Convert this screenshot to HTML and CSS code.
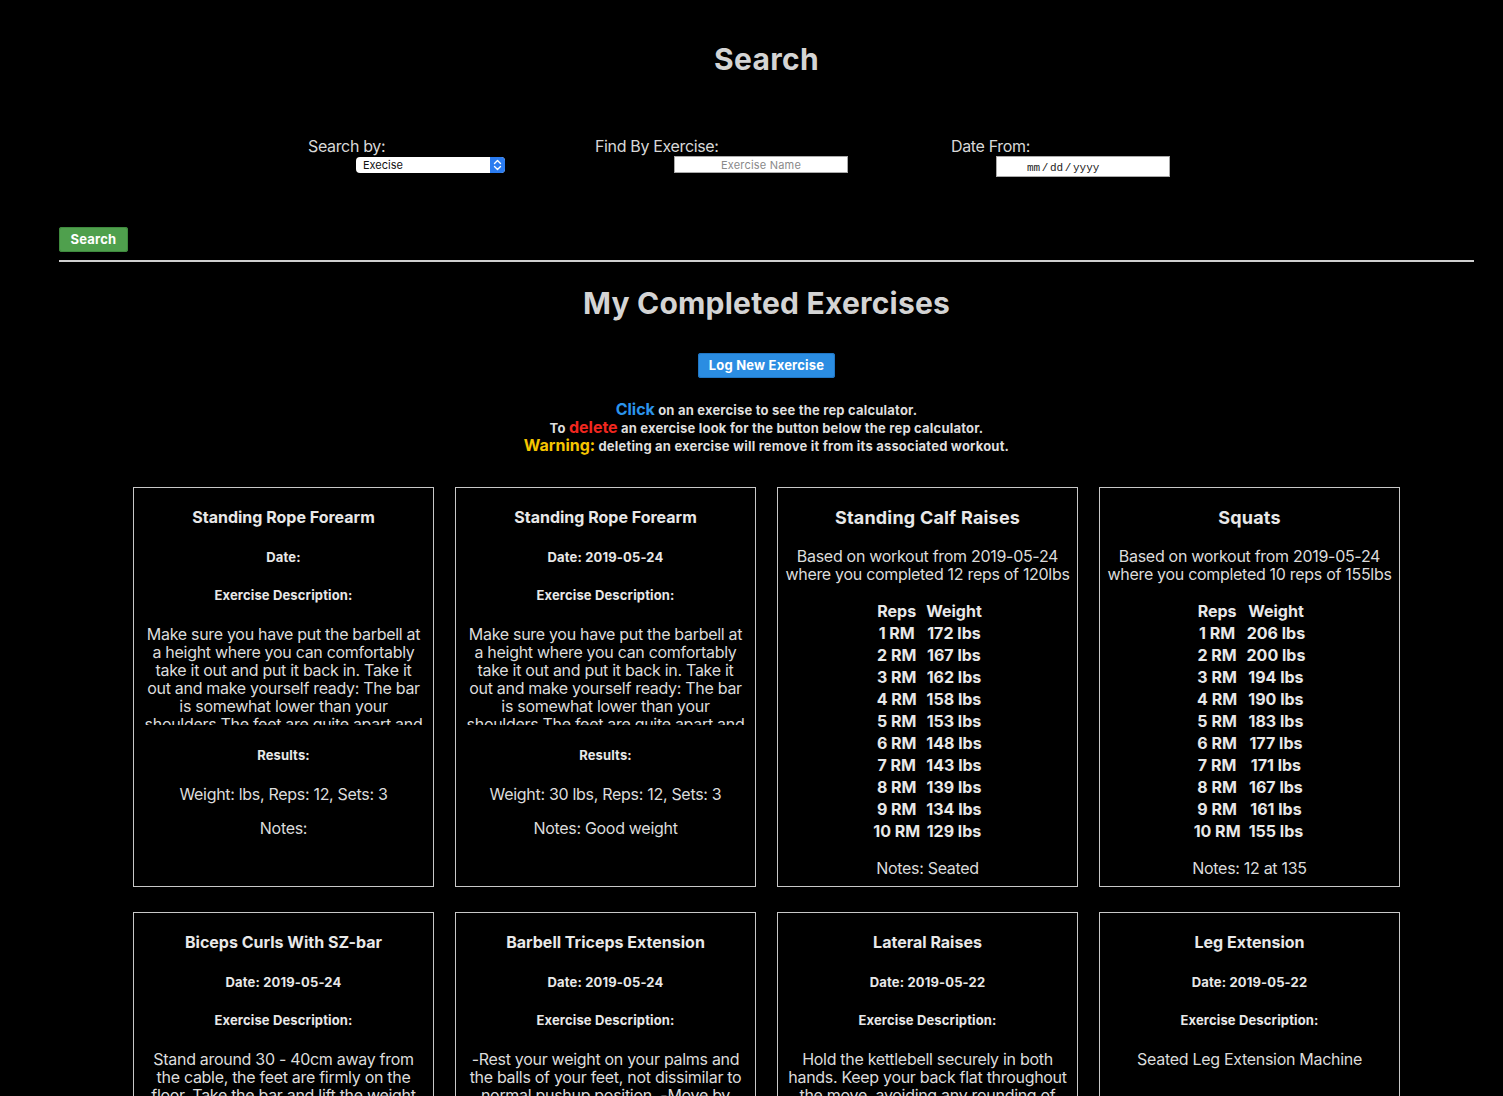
FILE: index.html
```html
<!DOCTYPE html>
<html lang="en">
<head>
<meta charset="utf-8">
<title>Search</title>
<link rel="stylesheet" href="styles.css">
</head>
<body>
<div class="page">
  <h1 class="page-title">Search</h1>
  <form class="search-form">
    <div class="search-row">
      <div class="field field-by">
        <label class="field-label">Search by:</label>
        <span class="select-wrap">
          <select class="select-input"><option>Execise</option></select>
          <span class="select-arrows"><svg width="15" height="16" viewBox="0 0 15 16"><path d="M4.5 6.5 7.5 3.5 10.5 6.5M4.5 9.5 7.5 12.5 10.5 9.5" fill="none" stroke="#fff" stroke-width="1.4" stroke-linecap="round" stroke-linejoin="round"/></svg></span>
        </span>
      </div>
      <div class="field field-name">
        <label class="field-label">Find By Exercise:</label>
        <input class="text-input" type="text" placeholder="Exercise Name">
      </div>
      <div class="field field-date">
        <label class="field-label">Date From:</label>
        <input class="date-input" type="text" spellcheck="false" placeholder="mm / dd / yyyy">
      </div>
    </div>
    <button class="btn btn-green" type="button">Search</button>
  </form>
  <hr class="divider">
  <h1 class="section-title">My Completed Exercises</h1>
  <div class="center"><button class="btn btn-blue" type="button">Log New Exercise</button></div>
  <div class="info">
    <p><span class="hl hl-blue">Click</span> on an exercise to see the rep calculator.</p>
    <p>To <span class="hl hl-red">delete</span> an exercise look for the button below the rep calculator.</p>
    <p><span class="hl hl-yellow">Warning:</span> deleting an exercise will remove it from its associated workout.</p>
  </div>

  <div class="cards">
    <div class="card">
      <h4 class="card-title">Standing Rope Forearm</h4>
      <h5 class="card-sub">Date:</h5>
      <h5 class="card-sub">Exercise Description:</h5>
      <p class="card-desc">Make sure you have put the barbell at a height where you can comfortably take it out and put it back in. Take it out and make yourself ready: The bar is somewhat lower than your shoulders The feet are quite apart and point a bit outwards. Go down slowly.</p>
      <h5 class="card-sub">Results:</h5>
      <p class="card-result">Weight: lbs, Reps: 12, Sets: 3</p>
      <p class="card-notes">Notes:</p>
    </div>
    <div class="card">
      <h4 class="card-title">Standing Rope Forearm</h4>
      <h5 class="card-sub">Date: 2019-05-24</h5>
      <h5 class="card-sub">Exercise Description:</h5>
      <p class="card-desc">Make sure you have put the barbell at a height where you can comfortably take it out and put it back in. Take it out and make yourself ready: The bar is somewhat lower than your shoulders The feet are quite apart and point a bit outwards. Go down slowly.</p>
      <h5 class="card-sub">Results:</h5>
      <p class="card-result">Weight: 30 lbs, Reps: 12, Sets: 3</p>
      <p class="card-notes">Notes: Good weight</p>
    </div>
    <div class="card card-calc">
      <h3 class="calc-title">Standing Calf Raises</h3>
      <p class="calc-based">Based on workout from 2019-05-24 where you completed 12 reps of 120lbs</p>
      <table class="rm-table">
        <tr><th>Reps</th><th>Weight</th></tr>
        <tr><td>1 RM</td><td>172 lbs</td></tr>
        <tr><td>2 RM</td><td>167 lbs</td></tr>
        <tr><td>3 RM</td><td>162 lbs</td></tr>
        <tr><td>4 RM</td><td>158 lbs</td></tr>
        <tr><td>5 RM</td><td>153 lbs</td></tr>
        <tr><td>6 RM</td><td>148 lbs</td></tr>
        <tr><td>7 RM</td><td>143 lbs</td></tr>
        <tr><td>8 RM</td><td>139 lbs</td></tr>
        <tr><td>9 RM</td><td>134 lbs</td></tr>
        <tr><td>10 RM</td><td>129 lbs</td></tr>
      </table>
      <p class="calc-notes">Notes: Seated</p>
    </div>
    <div class="card card-calc">
      <h3 class="calc-title">Squats</h3>
      <p class="calc-based">Based on workout from 2019-05-24 where you completed 10 reps of 155lbs</p>
      <table class="rm-table">
        <tr><th>Reps</th><th>Weight</th></tr>
        <tr><td>1 RM</td><td>206 lbs</td></tr>
        <tr><td>2 RM</td><td>200 lbs</td></tr>
        <tr><td>3 RM</td><td>194 lbs</td></tr>
        <tr><td>4 RM</td><td>190 lbs</td></tr>
        <tr><td>5 RM</td><td>183 lbs</td></tr>
        <tr><td>6 RM</td><td>177 lbs</td></tr>
        <tr><td>7 RM</td><td>171 lbs</td></tr>
        <tr><td>8 RM</td><td>167 lbs</td></tr>
        <tr><td>9 RM</td><td>161 lbs</td></tr>
        <tr><td>10 RM</td><td>155 lbs</td></tr>
      </table>
      <p class="calc-notes">Notes: 12 at 135</p>
    </div>

    <div class="card">
      <h4 class="card-title">Biceps Curls With SZ-bar</h4>
      <h5 class="card-sub">Date: 2019-05-24</h5>
      <h5 class="card-sub">Exercise Description:</h5>
      <p class="card-desc">Stand around 30 - 40cm away from the cable, the feet are firmly on the floor. Take the bar and lift the weight with a fast movements. Lower the weight as with the usual curls.</p>
      <h5 class="card-sub">Results:</h5>
      <p class="card-result">Weight: 25 lbs, Reps: 12, Sets: 3</p>
      <p class="card-notes">Notes:</p>
    </div>
    <div class="card">
      <h4 class="card-title">Barbell Triceps Extension</h4>
      <h5 class="card-sub">Date: 2019-05-24</h5>
      <h5 class="card-sub">Exercise Description:</h5>
      <p class="card-desc">-Rest your weight on your palms and the balls of your feet, not dissimilar to normal pushup position. -Move by stepping your hands forward and back.</p>
      <h5 class="card-sub">Results:</h5>
      <p class="card-result">Weight: 40 lbs, Reps: 10, Sets: 3</p>
      <p class="card-notes">Notes:</p>
    </div>
    <div class="card">
      <h4 class="card-title">Lateral Raises</h4>
      <h5 class="card-sub">Date: 2019-05-22</h5>
      <h5 class="card-sub">Exercise Description:</h5>
      <p class="card-desc">Hold the kettlebell securely in both hands. Keep your back flat throughout the move, avoiding any rounding of the spine.</p>
      <h5 class="card-sub">Results:</h5>
      <p class="card-result">Weight: 15 lbs, Reps: 12, Sets: 3</p>
      <p class="card-notes">Notes:</p>
    </div>
    <div class="card">
      <h4 class="card-title">Leg Extension</h4>
      <h5 class="card-sub">Date: 2019-05-22</h5>
      <h5 class="card-sub">Exercise Description:</h5>
      <p class="card-desc">Seated Leg Extension Machine</p>
      <h5 class="card-sub">Results:</h5>
      <p class="card-result">Weight: 90 lbs, Reps: 12, Sets: 3</p>
      <p class="card-notes">Notes:</p>
    </div>
  </div>
</div>
</body>
</html>
```

FILE: styles.css
```css
* { box-sizing: border-box; }
html, body { background: #000; }
body {
  margin: 0;
  font-family: Inter, "Liberation Sans", sans-serif;
  color: #e2e2e2;
}
.page {
  padding: 0 29px 40px 59px;
}
.page-title {
  margin: 41px 0 0;
  font-size: 30px;
  line-height: 36px;
  font-weight: 700;
  letter-spacing: 0.3px;
  text-align: center;
  color: #d4d4d4;
}
.search-form { margin: 0; }
.search-row {
  display: flex;
  margin-top: 60px;
  padding-left: 249px;
}
.field { display: flex; flex-direction: column; align-items: flex-start; }
.field-by { width: 287px; }
.field-name { width: 356px; }
.field-label {
  font-size: 16px;
  line-height: 19px;
  letter-spacing: -0.35px;
  color: #d8d8d8;
  font-weight: 400;
}
.select-wrap {
  position: relative;
  display: block;
  margin: 1px 0 0 48px;
  width: 149px;
  height: 16px;
}
.select-input {
  -webkit-appearance: none;
  appearance: none;
  display: block;
  width: 149px;
  height: 16px;
  border: 0;
  border-radius: 4px;
  background: #fff;
  color: #111;
  font-family: Inter, "Liberation Sans", sans-serif;
  font-size: 11px;
  line-height: 16px;
  padding: 0 0 0 7px;
  margin: 0;
}
.select-arrows {
  position: absolute;
  right: 0;
  top: 0;
  width: 15px;
  height: 16px;
  background: #2b7cf0;
  border-radius: 0 4px 4px 0;
  display: flex;
}
.text-input {
  margin: 0 0 0 79px;
  width: 174px;
  height: 17px;
  border: 1px solid #aaa;
  background: #fff;
  padding: 0;
  font-family: Inter, "Liberation Sans", sans-serif;
  font-size: 11px;
  text-align: center;
  color: #333;
}
.text-input::placeholder { color: #8a8a8a; letter-spacing: 0.2px; }
.date-input {
  margin: 0 0 0 45px;
  width: 174px;
  height: 21px;
  border: 1px solid #aaa;
  background: #fff;
  padding: 2px 0 0 30px;
  font-family: "Liberation Mono", monospace;
  font-size: 11px;
  color: #222;
}
.date-input::placeholder { color: #222; word-spacing: -5px; }
.btn {
  display: inline-block;
  border: 0;
  border-radius: 3px;
  color: #fff;
  font-family: Inter, "Liberation Sans", sans-serif;
  font-size: 13px;
  font-weight: 700;
  letter-spacing: 0.2px;
  height: 25px;
  line-height: 25px;
  padding: 0 13px;
  cursor: pointer;
}
.btn-green {
  display: block;
  margin-top: 50px;
  width: 69px;
  padding: 0;
  background: #4fa04d;
  box-shadow: inset 0 0 0 1px #3f8a3e;
}
.btn-blue {
  background: #2b8de2;
  width: 137px;
  padding: 0;
  box-shadow: inset 0 0 0 1px #2076c4;
}
.divider {
  margin: 8px 0 0;
  border: 0;
  height: 2px;
  background: #cfcfcf;
}
.section-title {
  margin: 23px 0 0;
  font-size: 30px;
  line-height: 36px;
  font-weight: 700;
  letter-spacing: 0.2px;
  text-align: center;
  color: #d4d4d4;
}
.center { text-align: center; margin-top: 32px; font-size: 0; }
.info {
  margin-top: 23px;
  text-align: center;
  font-size: 13px;
  font-weight: 700;
  letter-spacing: 0.2px;
  color: #dedede;
}
.info p { margin: 0; height: 18px; line-height: 18px; }
.hl { font-size: 16px; line-height: 16px; letter-spacing: 0; }
.hl-blue { color: #2b94ec; }
.hl-red { color: #f1271f; }
.hl-yellow { color: #f6c500; }

.cards {
  margin-top: 32px;
  display: grid;
  grid-template-columns: repeat(4, 301px);
  column-gap: 21px;
  row-gap: 25px;
  justify-content: center;
}
.card {
  height: 400px;
  border: 1px solid #c8c8c8;
  padding: 19px 8px 0;
  display: flex;
  flex-direction: column;
  align-items: stretch;
  text-align: center;
}
.card-title {
  margin: 0;
  font-size: 16px;
  line-height: 20px;
  font-weight: 700;
  color: #e8e8e8;
}
.card-sub {
  margin: 22px 0 0;
  font-size: 13px;
  line-height: 16px;
  font-weight: 700;
  letter-spacing: 0.15px;
  color: #e8e8e8;
}
.card-desc {
  margin: 22px 0 0;
  height: 100px;
  overflow: hidden;
  font-size: 16px;
  line-height: 18px;
  letter-spacing: -0.3px;
  color: #dcdcdc;
}
.card-result {
  margin: 21px 0 0;
  font-size: 16px;
  line-height: 20px;
  letter-spacing: -0.3px;
  color: #dcdcdc;
}
.card-notes {
  margin: 14px 0 0;
  font-size: 16px;
  line-height: 20px;
  letter-spacing: -0.3px;
  color: #dcdcdc;
}
.calc-title {
  margin: 0;
  font-size: 18px;
  line-height: 22px;
  font-weight: 700;
  letter-spacing: 0.2px;
  color: #e8e8e8;
}
.calc-based {
  margin: 18px -4px 0;
  font-size: 16px;
  line-height: 18px;
  letter-spacing: -0.3px;
  color: #dcdcdc;
}
.rm-table {
  margin: 16px auto 0;
  border-spacing: 2px;
  font-size: 16px;
  font-weight: 700;
  color: #e8e8e8;
}
.rm-table th, .rm-table td {
  padding: 1px 2px;
  line-height: 18px;
  text-align: center;
  font-weight: 700;
}
.calc-notes {
  margin: 15px 0 0;
  font-size: 16px;
  line-height: 20px;
  letter-spacing: -0.3px;
  color: #dcdcdc;
}
```
